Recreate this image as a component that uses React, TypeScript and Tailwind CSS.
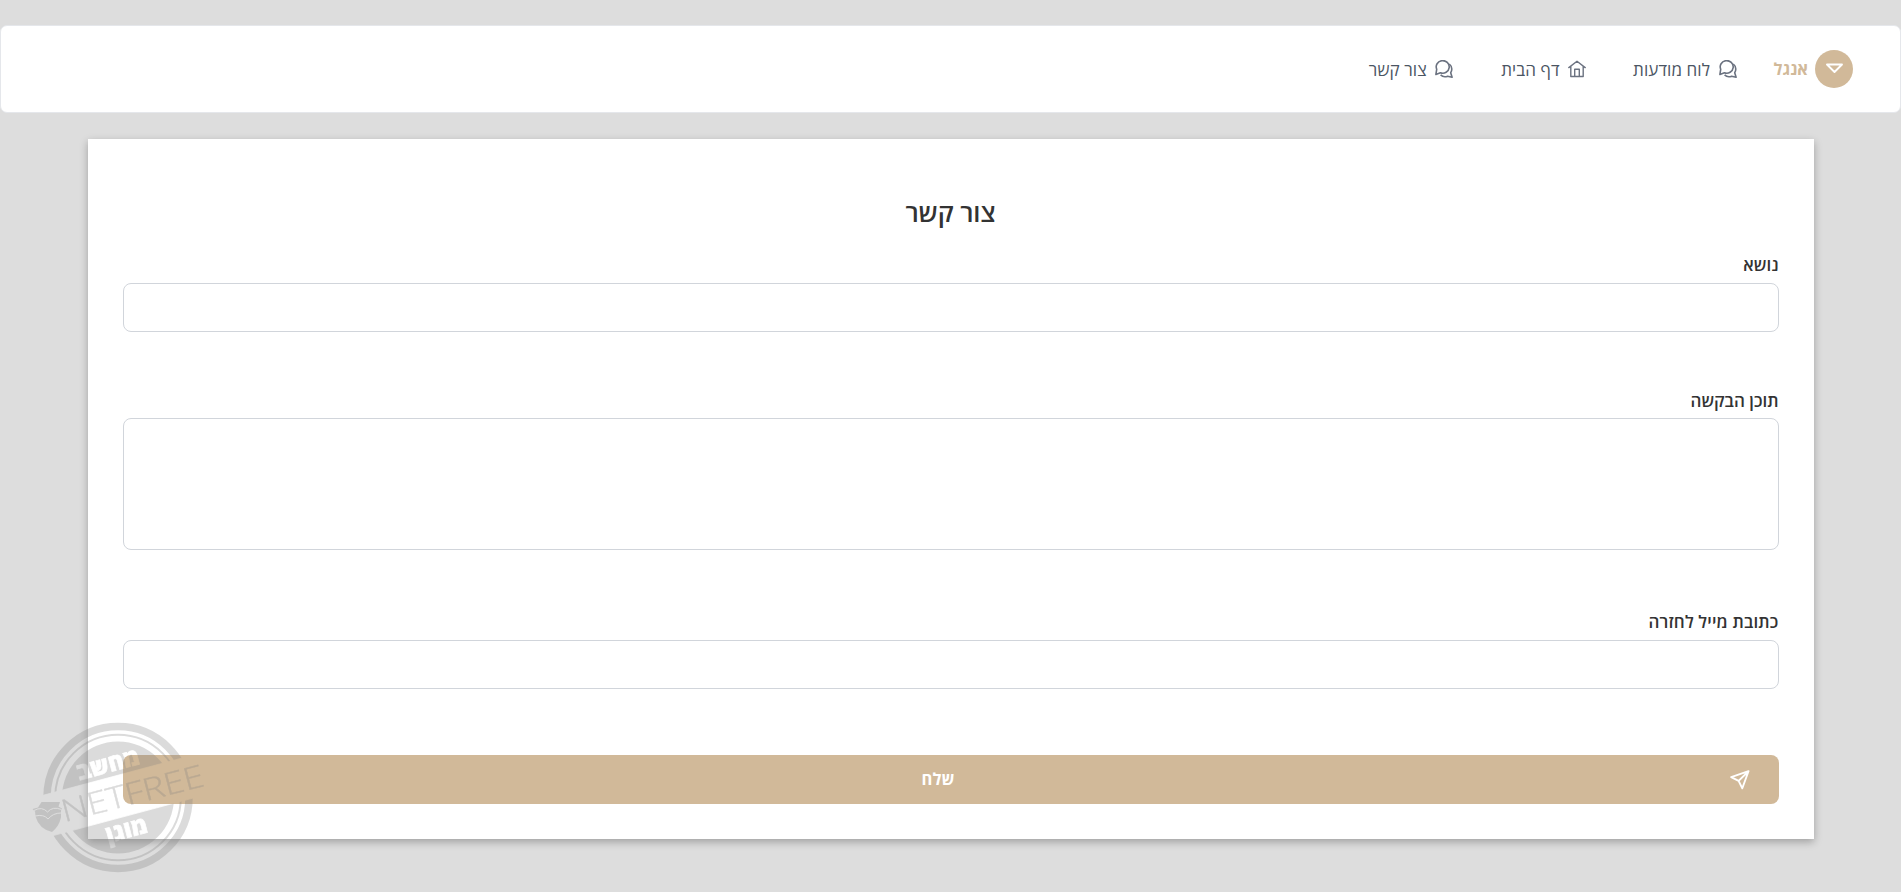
import React from 'react';

function Comments() {
  return (
    <svg width="18" height="18" viewBox="0 0 18 18" fill="none" stroke="#6b7280" strokeWidth="1.600" strokeLinejoin="round">
      <path d="M.9 14.400 1.700 9.300A6.500 6.300 0 1 1 5.400 12.800z" />
      <path d="M14.300 4c1.500 1.200 2.500 3.100 2.500 5 0 1.400-.4 2.700-1.100 3.700l1.400 4.500-4.500-1c-2.400 1-5 .7-7-1.300" />
    </svg>
  );
}

function Home() {
  return (
    <svg width="18" height="18" viewBox="0 0 18 18" fill="none" stroke="#6b7280" strokeWidth="1.400" strokeLinejoin="round" strokeLinecap="round">
      <path d="M.8 7.600 9 1.300l8.200 6.300M2.800 6.300v10.200h12.400V6.300M6.700 16.300V9.200h4.600v7.100" />
    </svg>
  );
}

function Send() {
  return (
    <svg width="20" height="20" viewBox="0 0 20 20" fill="none" stroke="#fff" strokeWidth="1.900" strokeLinejoin="round">
      <path d="M18.500 1.200 1.200 7.200l7.400 3.700 3.700 7.400zM18.500 1.200 8.600 10.900" />
    </svg>
  );
}

function Stamp() {
  return (
    <svg className="pointer-events-none absolute left-[28px] top-[718px]" width="180" height="160" viewBox="28 718 180 160">
      <defs>
        <mask id="band" maskUnits="userSpaceOnUse" x="28" y="718" width="180" height="160">
          <rect x="28" y="718" width="180" height="160" fill="#fff" />
          <g transform="rotate(-15 118 797.500)" fill="#000" stroke="#000" strokeWidth=".7" fontSize="23.500" fontWeight="800" fontFamily="Open Sans">
            <rect x="28" y="776" width="180" height="41.500" />
            <text x="117" y="771" textAnchor="middle" textLength="64" lengthAdjust="spacingAndGlyphs">מחשב</text>
            <text x="118" y="839" textAnchor="middle" textLength="42" lengthAdjust="spacingAndGlyphs">מוגן</text>
          </g>
        </mask>
        <mask id="leaf" maskUnits="userSpaceOnUse" x="28" y="795" width="40" height="42">
          <rect x="28" y="795" width="40" height="42" fill="#fff" />
          <path d="M34 810.500q8-4.500 13.500 1.500 5-6 14-2.500M35 816q9-2 13 3 5-6 13-6" fill="none" stroke="#000" strokeWidth="1" />
        </mask>
      </defs>
      <g opacity=".28">
        <g mask="url(#band)">
          <circle cx="118" cy="797.500" r="71" fill="none" stroke="#808080" strokeWidth="7.500" />
          <circle cx="118" cy="797.500" r="62.800" fill="none" stroke="#808080" strokeWidth="2" />
          <circle cx="118" cy="797.500" r="56" fill="#808080" />
        </g>
        <g transform="rotate(-14.500 118 797.500)">
          <text x="60" y="808" direction="ltr" textAnchor="start" fontSize="31" fontWeight="300" fontFamily="Open Sans" fill="#808080" stroke="#808080" strokeWidth=".4" textLength="146" lengthAdjust="spacingAndGlyphs">NETFREE</text>
        </g>
        <path mask="url(#leaf)" d="M41.500 802h18.500l-1.500 4.500 3.500 2-1 2v7q-2 9-9 14.500-13-3-16.500-15.500l-.5-5-2.500-2.500 5.500-1.500z" fill="#808080" />
      </g>
    </svg>
  );
}

function NavItem({ icon, label, className }: { icon: React.ReactNode; label: string; className: string }) {
  return (
    <a className={`flex items-center gap-[8.500px] text-[17px] tracking-[0.080px] text-[#4b5563] ${className}`}>
      {icon}
      <span className="pt-px">{label}</span>
    </a>
  );
}

export default function App() {
  return (
    <div dir="rtl" className="relative h-[892px] overflow-hidden bg-[#ddd] pt-[25px] font-['Open_Sans',sans-serif] text-[#333]">
      <nav className="flex h-[88px] items-center rounded-[7px] border border-[#e5e7eb] bg-white pr-[47px]">
        <div className="flex size-[38px] items-center justify-center rounded-full bg-[#d1b999]">
          <svg width="17" height="12" viewBox="0 0 17 12" fill="none" stroke="#fff" strokeWidth="1.900" strokeLinejoin="round">
            <path d="M1 1.500h15L8.500 9z" />
          </svg>
        </div>
        <span className="mr-[7px] text-[16.500px] font-bold text-[#d1b999]">אנגל</span>
        <NavItem icon={<Comments />} label="לוח מודעות" className="mr-[37px]" />
        <NavItem icon={<Home />} label="דף הבית" className="mr-[47px]" />
        <NavItem icon={<Comments />} label="צור קשר" className="mr-[48px]" />
      </nav>
      <main className="mx-auto mt-[26px] flex h-[700px] w-[1726px] flex-col bg-white px-[35px] shadow-[0_3px_8px_rgba(0,0,0,0.28)]">
        <h1 className="mt-[54px] h-[40px] text-center text-[25.600px] font-semibold leading-[40px]">צור קשר</h1>
        <label className="mt-[19px] h-[31px] text-[17px] font-semibold leading-[25px]">נושא</label>
        <input className="h-[49px] shrink-0 rounded-lg border border-[#d1d5db]" />
        <label className="mt-[56px] h-[30px] text-[17px] font-semibold leading-[25px]">תוכן הבקשה</label>
        <textarea className="h-[132px] shrink-0 resize-none rounded-lg border border-[#d1d5db]" />
        <label className="mt-[59px] h-[31px] text-[17px] font-semibold leading-[25px] tracking-[0.150px]">כתובת מייל לחזרה</label>
        <input className="h-[49px] shrink-0 rounded-lg border border-[#d1d5db]" />
        <button className="mt-[66px] flex h-[49px] shrink-0 items-center rounded-lg bg-[#d1b999] pr-[29px] pl-[24px] text-[16.500px] font-bold text-white">
          <Send />
          <span className="flex-1 text-center">שלח</span>
        </button>
      </main>
      <Stamp />
    </div>
  );
}
